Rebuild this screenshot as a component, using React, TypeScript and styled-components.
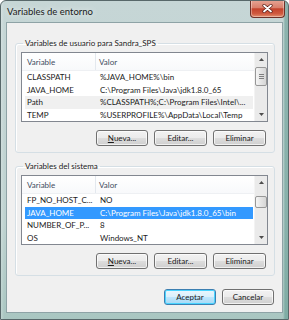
import { createGlobalStyle, styled } from 'styled-components';

interface Row {
  name: string;
  value: string;
  state?: 'selected' | 'inactive';
}

const userRows: Row[] = [
  { name: 'CLASSPATH', value: '%JAVA_HOME%\\bin' },
  { name: 'JAVA_HOME', value: 'C:\\Program Files\\Java\\jdk1.8.0_65' },
  { name: 'Path', value: '%CLASSPATH%;C:\\Program Files\\Intel\\...', state: 'inactive' },
  { name: 'TEMP', value: '%USERPROFILE%\\AppData\\Local\\Temp' },
];

const systemRows: Row[] = [
  { name: 'FP_NO_HOST_C...', value: 'NO' },
  { name: 'JAVA_HOME', value: 'C:\\Program Files\\Java\\jdk1.8.0_65\\bin', state: 'selected' },
  { name: 'NUMBER_OF_P...', value: '8' },
  { name: 'OS', value: 'Windows_NT' },
];

function ListView({ rows, thumbTop, thumbHeight }: { rows: Row[]; thumbTop: number; thumbHeight: number }) {
  return (
    <List>
      <ListBody>
        <Header>
          <HeaderCell $first>Variable</HeaderCell>
          <HeaderCell>Valor</HeaderCell>
        </Header>
        {rows.map(r => (
          <ItemRow key={r.name} $state={r.state}>
            <NameCell>{r.name}</NameCell>
            <ValueCell>{r.value}</ValueCell>
          </ItemRow>
        ))}
      </ListBody>
      <ScrollBar>
        <Arrow>
          <svg width="5" height="3" viewBox="0 0 5 3">
            <path d="M0 3 L2.5 0 L5 3 Z" fill="#4d4d4d" />
          </svg>
        </Arrow>
        <Track>
          <Thumb style={{ marginTop: thumbTop, height: thumbHeight }}>
            {thumbHeight > 14 && <Grip />}
          </Thumb>
        </Track>
        <Arrow>
          <svg width="5" height="3" viewBox="0 0 5 3">
            <path d="M0 0 L2.5 3 L5 0 Z" fill="#4d4d4d" />
          </svg>
        </Arrow>
      </ScrollBar>
    </List>
  );
}

function ButtonRow() {
  return (
    <Buttons>
      <Button $w={52}>
        <u>N</u>ueva...
      </Button>
      <Button $w={53}>Editar...</Button>
      <Button $w={53}>Eliminar</Button>
    </Buttons>
  );
}

export default function App() {
  return (
    <>
      <GlobalStyle />
      <Window>
        <TitleBar>
          <Title>Variables de entorno</Title>
          <CloseButton>
            <svg width="11" height="9" viewBox="0 0 11 9">
              <path d="M2 1.5 L9 7.5 M9 1.5 L2 7.5" stroke="#5a1d16" strokeWidth="3.2" strokeLinecap="round" />
              <path d="M2 1.5 L9 7.5 M9 1.5 L2 7.5" stroke="#ffffff" strokeWidth="1.8" strokeLinecap="round" />
            </svg>
          </CloseButton>
        </TitleBar>
        <Client>
          <Group>
            <Legend>Variables de usuario para Sandra_SPS</Legend>
            <ListView rows={userRows} thumbTop={1} thumbHeight={19} />
            <ButtonRow />
          </Group>
          <Group $second>
            <Legend>Variables del sistema</Legend>
            <ListView rows={systemRows} thumbTop={7} thumbHeight={12} />
            <ButtonRow />
          </Group>
          <Footer>
            <Button $w={52} $default>
              Aceptar
            </Button>
            <Button $w={52}>Cancelar</Button>
          </Footer>
        </Client>
      </Window>
    </>
  );
}

const GlobalStyle = createGlobalStyle`
  body {
    margin: 0;
    background: #ffffff;
  }
  * {
    box-sizing: border-box;
  }
`;

const Window = styled.div`
  width: 289px;
  height: 320px;
  display: flex;
  flex-direction: column;
  padding: 0 5px 6px 5px;
  border: 1px solid #58686a;
  border-radius: 6px 6px 0 0;
  background:
    linear-gradient(to right, rgba(255, 255, 255, 0.25), rgba(255, 255, 255, 0) 3px),
    linear-gradient(to left, rgba(92, 150, 140, 0.55) 3px, rgba(92, 150, 140, 0) 5px),
    linear-gradient(to bottom, #c6d6d6 0%, #bed2d0 70%, #a9c6c1 100%);
  font-family: Lato, 'Liberation Sans', sans-serif;
  font-size: 8px;
  color: #1b1b1b;
  overflow: hidden;
`;

const TitleBar = styled.div`
  height: 21px;
  display: flex;
  align-items: flex-start;
`;

const Title = styled.div`
  padding: 5px 0 0 1px;
  font-size: 9.5px;
  color: #1a1a1a;
  text-shadow: 0 0 6px rgba(255, 255, 255, 0.9);
`;

const CloseButton = styled.div`
  margin-left: auto;
  margin-right: -2px;
  margin-top: -1px;
  width: 35px;
  height: 18px;
  display: flex;
  align-items: center;
  justify-content: center;
  border: 1px solid #6e3128;
  border-top: none;
  border-radius: 0 0 4px 4px;
  background: linear-gradient(to bottom, #e7a696 0%, #d9806c 45%, #c4432c 52%, #cf5a3f 80%, #e28f6f 100%);
  box-shadow: inset 0 0 0 1px rgba(255, 255, 255, 0.35);
`;

const Client = styled.div`
  flex: 1;
  display: flex;
  flex-direction: column;
  padding: 15px 7px 0 8px;
  border: 1px solid #8ea3a6;
  background: #f0f0f0;
`;

const Group = styled.fieldset<{ $second?: boolean }>`
  margin: ${({ $second }) => ($second ? '8px 0 0' : '0')};
  padding: 3px 6px 6px 5px;
  border: 1px solid #d5dfe5;
  border-radius: 3px;
  box-shadow: inset 1px 1px 0 #ffffff;
  min-width: 0;
`;

const Legend = styled.legend`
  padding: 0 2px;
  margin-left: 2px;
  line-height: 11px;
`;

const List = styled.div`
  height: 70px;
  display: flex;
  border: 1px solid #828790;
  background: #ffffff;
`;

const ListBody = styled.div`
  flex: 1;
  min-width: 0;
  display: flex;
  flex-direction: column;
`;

const Header = styled.div`
  height: 18px;
  display: flex;
  align-items: center;
  border-bottom: 1px solid #eef0f3;
  background: linear-gradient(to bottom, #ffffff, #f8f9fb);
  color: #3e4c5e;
`;

const HeaderCell = styled.div<{ $first?: boolean }>`
  height: 100%;
  display: flex;
  align-items: center;
  white-space: nowrap;
  ${({ $first }) =>
    $first
      ? 'width: 74px; padding-left: 5px; border-right: 1px solid #e3e8ee;'
      : 'flex: 1; padding-left: 3px;'}
`;

const ItemRow = styled.div<{ $state?: 'selected' | 'inactive' }>`
  height: 12.5px;
  margin: 0 1px 0 3px;
  display: flex;
  align-items: center;
  white-space: nowrap;
  background: ${({ $state }) =>
    $state === 'selected' ? '#3399ff' : $state === 'inactive' ? '#f0f0f0' : 'transparent'};
  color: ${({ $state }) => ($state === 'selected' ? '#ffffff' : '#1b1b1b')};
`;

const NameCell = styled.div`
  width: 71px;
  padding-left: 2px;
  overflow: hidden;
`;

const ValueCell = styled.div`
  flex: 1;
  padding-left: 4px;
  overflow: hidden;
`;

const ScrollBar = styled.div`
  width: 13px;
  display: flex;
  flex-direction: column;
  background: #eaeaea;
  border-left: 1px solid #f3f3f3;
`;

const Arrow = styled.div`
  height: 13px;
  display: flex;
  align-items: center;
  justify-content: center;
`;

const Track = styled.div`
  flex: 1;
  display: flex;
  flex-direction: column;
  align-items: center;
`;

const Thumb = styled.div`
  width: 12px;
  display: flex;
  align-items: center;
  justify-content: center;
  border: 1px solid #979797;
  border-radius: 2px;
  background: linear-gradient(to right, #f5f5f5, #e4e4e4 50%, #d6d6d6);
`;

const Grip = styled.div`
  width: 5px;
  height: 5px;
  background: repeating-linear-gradient(to bottom, #7e7e7e 0 1px, transparent 1px 2px);
`;

const Buttons = styled.div`
  margin-top: 8px;
  padding-right: 2px;
  display: flex;
  justify-content: flex-end;
  gap: 6px;
`;

const Button = styled.div<{ $w: number; $default?: boolean }>`
  width: ${({ $w }) => $w}px;
  height: 16px;
  display: flex;
  align-items: center;
  justify-content: center;
  border: 1px solid ${({ $default }) => ($default ? '#3c7fb1' : '#707070')};
  border-radius: 3px;
  background: ${({ $default }) =>
    $default
      ? 'linear-gradient(to bottom, #eaf6fd 0%, #d9f0fc 50%, #bee6fd 51%, #a7d9f5 100%)'
      : 'linear-gradient(to bottom, #f2f2f2 0%, #ebebeb 50%, #dddddd 51%, #cfcfcf 100%)'};
  box-shadow: inset 0 0 0 1px ${({ $default }) => ($default ? '#48d4ff' : 'rgba(255, 255, 255, 0.7)')};
  color: #1b1b1b;
  white-space: nowrap;

  u {
    text-underline-offset: 1px;
  }
`;

const Footer = styled.div`
  margin-top: 13px;
  padding-right: 1px;
  display: flex;
  justify-content: flex-end;
  gap: 6px;
`;
